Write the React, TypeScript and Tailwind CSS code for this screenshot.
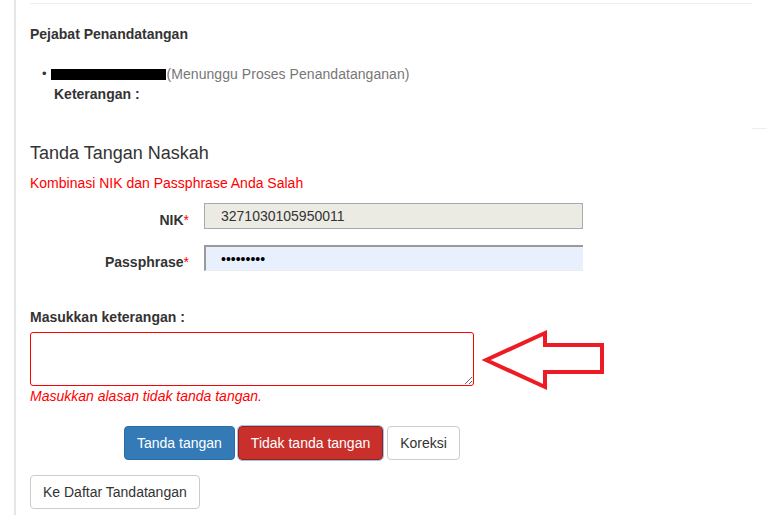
import React from 'react';

const font = { fontFamily: '"Liberation Sans", Arial, sans-serif' };

const FormRow: React.FC<{ label: string; children: React.ReactNode; className?: string }> = ({ label, children, className }) => (
  <div className={`flex items-start ${className ?? ''}`}>
    <label className="w-[159px] h-[26px] leading-[34px] text-right font-bold text-[14px] text-[#333]">
      {label}
      <span className="text-[#ff0000] font-normal">*</span>
    </label>
    <div className="ml-[15px]">{children}</div>
  </div>
);

const Arrow: React.FC = () => (
  <svg width="126" height="64" viewBox="0 0 126 64" className="absolute left-[482px] top-[328px]">
    <polygon
      points="4,32 63,5 63,17 120,17 120,44 63,44 63,59"
      fill="none"
      stroke="#ed1c24"
      strokeWidth="4"
      strokeLinejoin="miter"
    />
  </svg>
);

const App: React.FC = () => {
  return (
    <div className="relative w-[767px] h-[515px] overflow-hidden bg-white text-[#333] text-[14px]" style={font}>
      <div className="ml-[14px] h-full border-l-2 border-[#e5e5e5] pl-[14px]">
        {/* top rule */}
        <div className="h-[3px]" />
        <div className="h-px w-[722px] bg-[#eeeeee]" />

        <div className="mt-[20px] leading-[20px] font-bold">Pejabat Penandatangan</div>

        <ul className="mt-[20px] ml-[12px] leading-[20px]">
          <li className="flex items-center">
            <span className="text-[13px] mr-[4px]">•</span>
            <span className="inline-block w-[115px] h-[11px] bg-black" />
            <span className="ml-px text-[#777] tracking-[0.05px]">(Menunggu Proses Penandatanganan)</span>
          </li>
          <li className="pl-[12px] font-bold">Keterangan :</li>
        </ul>

        <div className="mt-[24px] flex justify-end">
          <div className="h-px w-[15px] bg-[#eeeeee]" />
        </div>

        <h3 className="mt-[12px] text-[18px] leading-[24px]">Tanda Tangan Naskah</h3>
        <div className="mt-[8px] leading-[20px] text-[#ff0000]">Kombinasi NIK dan Passphrase Anda Salah</div>

        <FormRow label="NIK" className="mt-[10px]">
          <input
            readOnly
            value="3271030105950011"
            className="w-[379px] h-[26px] border border-[#a9a9a9] bg-[#ebebe4] pl-[16px] text-[14px] text-[#333] outline-none"
          />
        </FormRow>

        <FormRow label="Passphrase" className="mt-[16px]">
          <input
            readOnly
            type="password"
            value="123456789"
            className="w-[379px] h-[26px] border-t-2 border-l-2 border-[#9a9a9a] border-b border-b-[#ececec] bg-[#e8f0fe] pl-[15px] text-[14px] text-black outline-none"
          />
        </FormRow>

        <div className="mt-[36px] leading-[20px] font-bold">Masukkan keterangan :</div>
        <textarea className="mt-[5px] block w-[444px] h-[54px] rounded-[3px] border border-[#ff0000] bg-white outline-none" />
        <div className="leading-[20px] italic text-[#ff0000]">Masukkan alasan tidak tanda tangan.</div>

        <div className="mt-[20px] ml-[94px] flex gap-[3px]">
          <button className="h-[34px] px-[12px] rounded-[4px] border border-[#2e6da4] bg-[#337ab7] text-white text-[14px]">
            Tanda tangan
          </button>
          <button className="h-[34px] px-[12px] rounded-[4px] border border-[#8c2520] bg-[#c9302c] text-white text-[14px] outline outline-1 outline-[#a9c2ec]">
            Tidak tanda tangan
          </button>
          <button className="ml-[1px] h-[34px] px-[12px] rounded-[4px] border border-[#cccccc] bg-white text-[#333] text-[14px]">
            Koreksi
          </button>
        </div>

        <button className="mt-[15px] h-[34px] px-[12px] rounded-[4px] border border-[#cccccc] bg-white text-[#333] text-[14px]">
          Ke Daftar Tandatangan
        </button>
      </div>

      <Arrow />
    </div>
  );
};

export default App;
